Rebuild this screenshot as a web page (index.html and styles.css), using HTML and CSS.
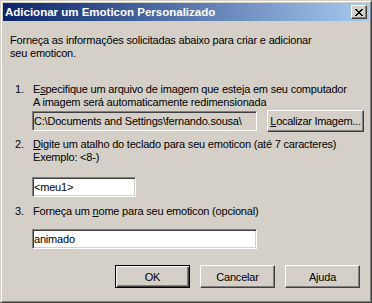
FILE: index.html
```html
<!DOCTYPE html>
<html lang="pt-BR">
<head>
  <meta charset="UTF-8" />
  <title>Adicionar um Emoticon Personalizado</title>
  <link rel="stylesheet" href="styles.css">
</head>
<body>

<div class="window">
  <div class="titlebar">
    <span class="title">Adicionar um Emoticon Personalizado</span>
    <button class="close" type="button" aria-label="Fechar">
      <svg width="8" height="7" viewBox="0 0 8 7">
        <path d="M0 0h2v1h-2zM6 0h2v1h-2zM1 1h2v1h-2zM5 1h2v1h-2zM2 2h4v1h-4zM3 3h2v1h-2zM2 4h4v1h-4zM1 5h2v1h-2zM5 5h2v1h-2zM0 6h2v1h-2zM6 6h2v1h-2z" fill="#000"/>
      </svg>
    </button>
  </div>

  <form class="content" id="emoticonForm">
    <p class="intro">Forneça as informações solicitadas abaixo para criar e adicionar<br>seu emoticon.</p>

    <div class="step step-1">
      <span class="num">1.</span>
      <span>E<u>s</u>pecifique um arquivo de imagem que esteja em seu computador<br>A imagem será automaticamente redimensionada</span>
    </div>
    <div class="row row-path">
      <input class="field field-path" type="text" readonly value="C:\Documents and Settings\fernando.sousa\">
      <button class="btn btn-browse" type="button"><u>L</u>ocalizar Imagem...</button>
    </div>

    <div class="step step-2">
      <span class="num">2.</span>
      <span><u>D</u>igite um atalho do teclado para seu emoticon (até 7 caracteres)<br>Exemplo: &lt;8-)</span>
    </div>
    <div class="row row-short">
      <input class="field field-short" type="text" value="<meu1>">
    </div>

    <div class="step step-3">
      <span class="num">3.</span>
      <span>Forneça um <u>n</u>ome para seu emoticon (opcional)</span>
    </div>
    <div class="row row-name">
      <input class="field field-name" type="text" value="animado">
    </div>

    <div class="actions">
      <button class="btn btn-default" type="submit">OK</button>
      <button class="btn" type="button">Cancelar</button>
      <button class="btn" type="button">Ajuda</button>
    </div>
  </form>
</div>

</body>
</html>
```

FILE: styles.css
```css
* {
  box-sizing: border-box;
}
body {
  margin: 0;
  background: #d4d0c8;
  font-family: "Liberation Sans", Arial, sans-serif;
  font-size: 11px;
  letter-spacing: -0.2px;
  color: #000;
}
.window {
  width: 372px;
  height: 303px;
  padding: 2px;
  background: #d4d0c8;
  border: 1px solid;
  border-color: #d4d0c8 #404040 #404040 #d4d0c8;
  box-shadow: inset 1px 1px #fff, inset -1px -1px #808080;
}
.titlebar {
  height: 18px;
  display: flex;
  align-items: center;
  justify-content: space-between;
  padding: 0 2px 0 2px;
  background: linear-gradient(to right, #0a246a, #a6caf0);
}
.title {
  color: #fff;
  font-weight: bold;
  font-size: 11.5px;
  letter-spacing: 0;
  line-height: 18px;
}
.close {
  width: 16px;
  height: 14px;
  padding: 0;
  display: flex;
  align-items: center;
  justify-content: center;
  background: #d4d0c8;
  border: 1px solid;
  border-color: #fff #404040 #404040 #fff;
  box-shadow: inset -1px -1px #808080;
}
.content {
  margin: 0;
  padding: 13px 0 0 7px;
}
.intro {
  margin: 0;
  line-height: 13px;
}
.step {
  display: flex;
  line-height: 13px;
  padding-left: 5px;
}
.num {
  width: 18px;
  flex: none;
}
.step-1 {
  margin-top: 23px;
}
.step-2 {
  margin-top: 6px;
}
.step-3 {
  margin-top: 8px;
}
.row {
  display: flex;
  align-items: center;
  gap: 10px;
  padding-left: 22px;
}
.row-path {
  margin-top: 1px;
}
.row-short {
  margin-top: 13px;
}
.row-name {
  margin-top: 11px;
}
.field {
  height: 20px;
  padding: 0 1px;
  margin: 0;
  font: inherit;
  letter-spacing: inherit;
  color: #000;
  background: #fff;
  border: 1px solid;
  border-color: #808080 #fff #fff #808080;
  box-shadow: inset 1px 1px #404040, inset -1px -1px #d4d0c8;
  outline: none;
}
.field-path {
  width: 225px;
  background: #d4d0c8;
}
.field-short {
  width: 104px;
}
.field-name {
  width: 225px;
}
.btn {
  height: 23px;
  width: 75px;
  padding: 0;
  font: inherit;
  letter-spacing: inherit;
  white-space: nowrap;
  color: #000;
  background: #d4d0c8;
  border: 1px solid;
  border-color: #fff #404040 #404040 #fff;
  box-shadow: inset -1px -1px #808080;
}
.btn-browse {
  width: 97px;
  height: 22px;
  letter-spacing: -0.3px;
}
.btn-default {
  border-color: #000;
  box-shadow: inset 1px 1px #fff, inset -1px -1px #404040, inset -2px -2px #808080;
}
.actions {
  display: flex;
  gap: 10px;
  justify-content: flex-end;
  margin-top: 16px;
  padding-right: 9px;
}
```
